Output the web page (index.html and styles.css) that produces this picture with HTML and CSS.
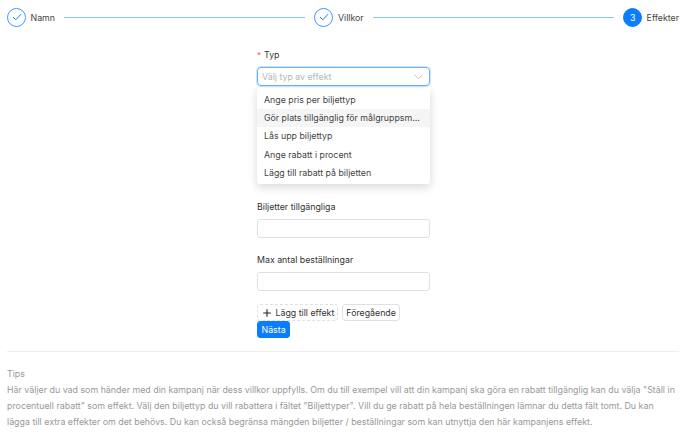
FILE: index.html
```html
<!DOCTYPE html>
<html>
<head>
	<title>Effekter</title>
	<link rel="stylesheet" href="styles.css">
</head>
<body>

	<div class="steps">
		<div class="step">
			<span class="step-icon">
				<svg width="10" height="8" viewBox="0 0 10 8"><path d="M1 4 L3.8 6.8 L9 1.2" fill="none" stroke="#0a7cff" stroke-width="1"/></svg>
			</span>
			<span class="step-title">Namn</span>
		</div>
		<div class="step-line"></div>
		<div class="step">
			<span class="step-icon">
				<svg width="10" height="8" viewBox="0 0 10 8"><path d="M1 4 L3.8 6.8 L9 1.2" fill="none" stroke="#0a7cff" stroke-width="1"/></svg>
			</span>
			<span class="step-title">Villkor</span>
		</div>
		<div class="step-line"></div>
		<div class="step">
			<span class="step-icon active">3</span>
			<span class="step-title">Effekter</span>
		</div>
	</div>

	<form class="form">
		<div class="field field-type">
			<label class="label"><span class="req">*</span>Typ</label>
			<div class="select">
				<span class="placeholder">Välj typ av effekt</span>
				<svg class="arrow" width="9" height="6" viewBox="0 0 9 6"><path d="M0.7 0.8 L4.5 4.8 L8.3 0.8" fill="none" stroke="#c4c4c4" stroke-width="1"/></svg>
			</div>
			<ul class="menu">
				<li>Ange pris per biljettyp</li>
				<li class="hover">Gör plats tillgänglig för målgruppsm...</li>
				<li>Lås upp biljettyp</li>
				<li>Ange rabatt i procent</li>
				<li>Lägg till rabatt på biljetten</li>
			</ul>
		</div>
		<div class="field">
			<label class="label">Biljetter tillgängliga</label>
			<input class="input" type="text">
		</div>
		<div class="field">
			<label class="label">Max antal beställningar</label>
			<input class="input" type="text">
		</div>
		<div class="buttons">
			<button class="btn btn-dashed" type="button">
				<svg width="8" height="8" viewBox="0 0 8 8"><path d="M4 0.2 V7.8 M0.2 4 H7.8" fill="none" stroke="#222" stroke-width="1.1"/></svg>
				<span>Lägg till effekt</span>
			</button>
			<button class="btn" type="button">Föregående</button>
			<button class="btn btn-primary" type="button">Nästa</button>
		</div>
	</form>

	<div class="tips">
		<div>Tips</div>
		<p>Här väljer du vad som händer med din kampanj när dess villkor uppfylls. Om du till exempel vill att din kampanj ska göra en rabatt tillgänglig kan du välja "Ställ in procentuell rabatt" som effekt. Välj den biljettyp du vill rabattera i fältet "Biljettyper". Vill du ge rabatt på hela beställningen lämnar du detta fält tomt. Du kan lägga till extra effekter om det behövs. Du kan också begränsa mängden biljetter / beställningar som kan utnyttja den här kampanjens effekt.</p>
	</div>

</body>
</html>
```

FILE: styles.css
```css
* {
	box-sizing: border-box;
}
body {
	margin: 0;
	padding: 7px 9px 0 7px;
	font-family: Inter, "Liberation Sans", sans-serif;
	font-size: 8.8px;
	color: #333;
	background-color: #fff;
}
.steps {
	display: flex;
	align-items: center;
	height: 20px;
	gap: 9px;
}
.step {
	display: flex;
	align-items: center;
	gap: 4.5px;
}
.step-icon {
	display: flex;
	align-items: center;
	justify-content: center;
	width: 19px;
	height: 19px;
	border: 1px solid #3f97ff;
	border-radius: 50%;
	color: #fff;
	font-size: 8.8px;
}
.step-icon.active {
	background-color: #0a7cff;
	border-color: #0a7cff;
}
.step-title {
	color: #444;
}
.step-line {
	flex: 1;
	height: 1px;
	background-color: #8cc3ff;
}
.form {
	width: 173px;
	margin: 21px 0 0 250px;
}
.field {
	position: relative;
	margin-bottom: 15px;
}
.field-type {
	margin-bottom: 114px;
}
.label {
	display: block;
	height: 13px;
	margin-bottom: 6px;
	line-height: 13px;
}
.req {
	margin-right: 3px;
	color: #ff4d4f;
	font-size: 8px;
}
.select {
	display: flex;
	align-items: center;
	justify-content: space-between;
	height: 19px;
	padding: 0 6px 0 4px;
	border: 1px solid #69b1ff;
	border-radius: 4px;
	box-shadow: 0 0 0 1px #cfe6ff;
}
.placeholder {
	color: #b5b5b5;
}
.menu {
	position: absolute;
	top: 40px;
	left: 0;
	width: 173px;
	margin: 0;
	padding: 2.5px 0 1.5px;
	list-style: none;
	background-color: #fff;
	border-radius: 3px;
	box-shadow: 0 3px 10px rgba(0, 0, 0, 0.16);
}
.menu li {
	height: 18.4px;
	padding: 0 7px;
	line-height: 18.4px;
	color: #444;
	white-space: nowrap;
}
.menu li.hover {
	background-color: #f5f5f5;
}
.input {
	display: block;
	width: 100%;
	height: 19px;
	border: 1px solid #e0e0e0;
	border-radius: 3px;
}
.buttons {
	display: flex;
	flex-wrap: wrap;
	gap: 0 4px;
	margin-top: -2px;
}
.btn {
	display: flex;
	align-items: center;
	height: 17px;
	padding: 0 3px;
	font-family: inherit;
	font-size: 8.8px;
	color: #333;
	background-color: #fff;
	border: 1px solid #e0e0e0;
	border-radius: 3px;
}
.btn svg {
	margin: 0 4.5px 0 2px;
}
.btn-dashed {
	border-style: dashed;
}
.btn-primary {
	padding: 0 3.5px;
	color: #fff;
	background-color: #0a7cff;
	border-color: #0a7cff;
}
.tips {
	margin-top: 13px;
	padding-top: 14px;
	border-top: 1px solid #efefef;
	font-size: 8.85px;
	color: #999;
	line-height: 16px;
}
.tips p {
	margin: 0;
}
```
